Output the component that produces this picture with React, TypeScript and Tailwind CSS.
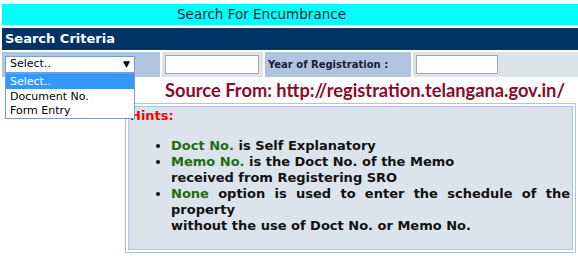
const font = { fontFamily: '"DejaVu Sans", Verdana, sans-serif' };

const App = () => {
  return (
    <div className="w-[578px] h-[256px] bg-white pt-[4px] pl-[2px] relative overflow-hidden" style={font}>
      {/* title bar */}
      <div className="h-[21px] bg-[#00ffff] flex items-center pl-[175px] text-[13.5px] text-[#1a2a2a]">
        Search For Encumbrance
      </div>

      {/* criteria header */}
      <div className="mt-[3px] h-[22px] bg-[#003366] flex items-center pl-[3px] text-[13px] font-bold text-white">
        Search Criteria
      </div>

      {/* criteria row */}
      <div className="mt-[2px] h-[25px] flex gap-[2px]">
        <div className="w-[158px] bg-[#b0c4de] pl-[3px] pt-[4px] relative">
          <div className="w-[130px] h-[17px] bg-white border border-[#7a9cd3] flex items-center justify-between pl-[4px] pr-[4px] text-[11px] text-black">
            <span>Select..</span>
            <span className="text-[9px]">▼</span>
          </div>
          {/* open dropdown list */}
          <div className="absolute left-[3px] top-[21px] w-[130px] bg-white border border-[#7a9cd3] text-[11px] text-black z-10">
            <div className="h-[15px] bg-[#3399ff] text-white pl-[4px] leading-[15px]">Select..</div>
            <div className="h-[15px] pl-[4px] leading-[15px]">Document No.</div>
            <div className="h-[14px] pl-[4px] leading-[14px]">Form Entry</div>
          </div>
        </div>
        <div className="w-[101px] bg-[#dde3eb] pl-[3px] pt-[3px]">
          <div className="w-[94px] h-[19px] bg-white border border-[#a8a8a8]" />
        </div>
        <div className="w-[146px] bg-[#b0c4de] flex items-center pl-[3px] text-[10px] font-bold text-[#1a1a3a]">
          Year of Registration :
        </div>
        <div className="flex-1 bg-[#dde3eb] pl-[3px] pt-[3px]">
          <div className="w-[82px] h-[19px] bg-white border border-[#a8a8a8]" />
        </div>
      </div>

      {/* source */}
      <div
        className="mt-[2px] pl-[163px] text-[18.3px] font-bold text-[#8b0a2a] leading-[23px] whitespace-nowrap"
        style={{ fontFamily: 'Lato, "Open Sans", sans-serif' }}
      >
        Source From: http://registration.telangana.gov.in/
      </div>

      {/* hints box */}
      <div className="ml-[123px] mt-[1px] w-[451px] h-[150px] border border-[#a9c6ec] p-[2px]">
        <div className="h-full bg-[#dce3ea] border border-[#a9c6ec] pl-[1px] pr-[2px] text-[13px] font-bold leading-[16px] text-[#111]">
          <div className="text-[#ff0000] mt-[1px]">Hints:</div>
          <ul className="list-disc pl-[41px] mt-[14px] text-justify">
            <li>
              <span className="text-[#1f6b12]">Doct No.</span> is Self Explanatory
            </li>
            <li>
              <span className="text-[#1f6b12]">Memo No.</span> is the Doct No. of the Memo
              <br />
              received from Registering SRO
            </li>
            <li>
              <span className="text-[#1f6b12]">None</span> option is used to enter the schedule of the property
              <br />
              without the use of Doct No. or Memo No.
            </li>
          </ul>
        </div>
      </div>
    </div>
  );
};

export default App;
